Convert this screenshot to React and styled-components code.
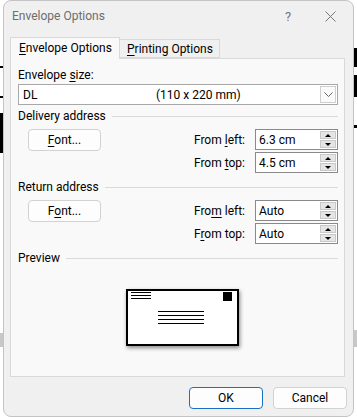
import React from "react";
import styled, { createGlobalStyle } from "styled-components";

const Global = createGlobalStyle`
  html, body { margin: 0; padding: 0; background: #ffffff; }
  body { font-family: "Segoe UI", Roboto, "Noto Sans", sans-serif; font-size: 12px; color: #000; }
  #root { position: relative; width: 357px; height: 418px; overflow: hidden; }
`;

const Backdrop = styled.div`
  position: absolute;
  left: ${(p) => p.$x}px;
  top: ${(p) => p.$y}px;
  width: ${(p) => p.$w}px;
  height: ${(p) => p.$h}px;
  background: ${(p) => p.$c || "#000"};
`;

const Window = styled.div`
  position: relative;
  margin-left: 3px;
  width: 351px;
  height: 417px;
  box-sizing: border-box;
  border: 1px solid #c4c4c4;
  border-radius: 8px;
  background: #f0f0f0;
  display: flex;
  flex-direction: column;
  padding: 0 6px;
`;

const TitleBar = styled.div`
  height: 30px;
  display: flex;
  align-items: center;
  padding-left: 2px;
  color: #6d6d6d;
`;

const Title = styled.div`
  flex: 1;
`;

const TitleButton = styled.div`
  width: ${(p) => p.$w}px;
  display: flex;
  justify-content: center;
  align-items: center;
  color: #777;
  font-size: 13px;
`;

const Tabs = styled.div`
  margin-top: 6px;
  height: 21px;
  display: flex;
  align-items: flex-end;
  position: relative;
  z-index: 1;
`;

const Tab = styled.div`
  box-sizing: border-box;
  width: ${(p) => p.$w}px;
  height: ${(p) => (p.$active ? 22 : 19)}px;
  margin-bottom: ${(p) => (p.$active ? -1 : 0)}px;
  padding-left: ${(p) => p.$pad}px;
  display: flex;
  align-items: center;
  border: 1px solid #d9d9d9;
  border-bottom: ${(p) => (p.$active ? "none" : "1px solid #d9d9d9")};
  border-left: ${(p) => (p.$first ? "1px solid #d9d9d9" : "none")};
  background: ${(p) => (p.$active ? "#f9f9f9" : "#f0f0f0")};
  padding-bottom: ${(p) => (p.$active ? 1 : 0)}px;
`;

const Panel = styled.div`
  box-sizing: border-box;
  height: 319px;
  margin-right: 2px;
  border: 1px solid #d9d9d9;
  background: #f9f9f9;
  padding: 8px 6px 0 7px;
  display: flex;
  flex-direction: column;
`;

const Label = styled.div`
  line-height: 16px;
  height: 16px;
`;

const Combo = styled.div`
  margin-top: 1px;
  height: 21px;
  box-sizing: border-box;
  border: 1px solid #a8a8a8;
  background: #fff;
  display: flex;
  align-items: center;
  padding-left: 4px;
`;

const ComboMain = styled.span`
  width: 133px;
`;

const ComboRest = styled.span`
  flex: 1;
`;

const DropButton = styled.div`
  width: 16px;
  height: 17px;
  margin-right: 1px;
  box-sizing: border-box;
  border: 1px solid #cfcfcf;
  background: #fafafa;
  display: flex;
  align-items: center;
  justify-content: center;
`;

const GroupHeader = styled.div`
  margin-top: ${(p) => p.$mt}px;
  height: 16px;
  line-height: 16px;
  display: flex;
  align-items: center;
  gap: 6px;
  &::after {
    content: "";
    flex: 1;
    height: 1px;
    background: #dadada;
  }
`;

const AddressGrid = styled.div`
  margin-top: 5px;
  display: grid;
  grid-template-columns: 1fr auto 83px;
  grid-template-rows: 21px 21px;
  row-gap: 2px;
  column-gap: 10px;
  align-items: center;
`;

const PushButton = styled.button`
  box-sizing: border-box;
  width: ${(p) => p.$w || 74}px;
  height: 22px;
  margin-left: ${(p) => p.$ml || 0}px;
  border: 1px solid ${(p) => (p.$default ? "#1a6fc4" : "#d2d2d2")};
  border-radius: 4px;
  background: #fdfdfd;
  font: inherit;
  color: #000;
  padding: 0;
  align-self: start;
`;

const FieldLabel = styled.div`
  text-align: right;
`;

const SpinBox = styled.div`
  height: 21px;
  box-sizing: border-box;
  border: 1px solid #8a8a8a;
  background: #fff;
  display: flex;
  align-items: center;
  padding-left: 3px;
`;

const SpinText = styled.span`
  flex: 1;
`;

const SpinButtons = styled.div`
  width: 16px;
  height: 17px;
  margin-right: 1px;
  display: flex;
  flex-direction: column;
  gap: 1px;
`;

const SpinHalf = styled.div`
  flex: 1;
  box-sizing: border-box;
  background: #e5e5e5;
  border: 1px solid #c8c8c8;
  display: flex;
  align-items: center;
  justify-content: center;
  &::before {
    content: "";
    width: 0;
    height: 0;
    border-left: 3px solid transparent;
    border-right: 3px solid transparent;
    ${(p) => (p.$up ? "border-bottom: 3px solid #000;" : "border-top: 3px solid #000;")}
  }
`;

const PreviewArea = styled.div`
  margin-top: 23px;
  padding-left: 108px;
`;

const Envelope = styled.div`
  position: relative;
  width: 113px;
  height: 57px;
  box-sizing: border-box;
  border: 2px solid #000;
  background: #fff;
  box-shadow: 1px 2px 4px rgba(0, 0, 0, 0.45);
`;

const Lines = styled.div`
  position: absolute;
  left: ${(p) => p.$x}px;
  top: ${(p) => p.$y}px;
  width: ${(p) => p.$w}px;
  display: flex;
  flex-direction: column;
  gap: ${(p) => p.$gap}px;
  & > i {
    display: block;
    height: 1px;
    background: #000;
  }
`;

const Stamp = styled.div`
  position: absolute;
  right: 5px;
  top: 1px;
  width: 9px;
  height: 9px;
  background: #000;
`;

const ButtonRow = styled.div`
  margin-top: 10px;
  display: flex;
  justify-content: flex-end;
  gap: 10px;
`;

const Key = styled.u`
  text-decoration: underline;
  text-underline-offset: 2px;
  text-decoration-thickness: 1px;
`;

function Spin({ value }) {
  return (
    <SpinBox>
      <SpinText>{value}</SpinText>
      <SpinButtons>
        <SpinHalf $up />
        <SpinHalf />
      </SpinButtons>
    </SpinBox>
  );
}

export default function App() {
  return (
    <>
      <Global />
      <Backdrop $x={0} $y={66} $w={3} $h={2} />
      <Backdrop $x={0} $y={96} $w={3} $h={2} />
      <Backdrop $x={0} $y={113} $w={3} $h={40} />
      <Backdrop $x={0} $y={333} $w={3} $h={14} $c="#c8c8c8" />
      <Backdrop $x={354} $y={48} $w={3} $h={19} />
      <Backdrop $x={354} $y={75} $w={3} $h={22} />
      <Backdrop $x={354} $y={125} $w={3} $h={3} />
      <Backdrop $x={354} $y={330} $w={3} $h={17} $c="#c8c8c8" />
      <Window>
        <TitleBar>
          <Title>Envelope Options</Title>
          <TitleButton $w={22}>?</TitleButton>
          <TitleButton $w={22} style={{ marginLeft: 20, marginRight: 6 }}>
            <svg width="11" height="11" viewBox="0 0 11 11">
              <path d="M0.5 0.5 L10.5 10.5 M10.5 0.5 L0.5 10.5" stroke="#777" strokeWidth="1" fill="none" />
            </svg>
          </TitleButton>
        </TitleBar>
        <Tabs>
          <Tab $active $first $w={110} $pad={8}>
            <span><Key>E</Key>nvelope Options</span>
          </Tab>
          <Tab $w={100} $pad={7}>
            <span><Key>P</Key>rinting Options</span>
          </Tab>
        </Tabs>
        <Panel>
          <Label>Envelope <Key>s</Key>ize:</Label>
          <Combo>
            <ComboMain>DL</ComboMain>
            <ComboRest>(110 x 220 mm)</ComboRest>
            <DropButton>
              <svg width="9" height="5" viewBox="0 0 9 5">
                <path d="M0.5 0.5 L4.5 4.5 L8.5 0.5" stroke="#666" strokeWidth="1" fill="none" />
              </svg>
            </DropButton>
          </Combo>
          <GroupHeader $mt={3}>Delivery address</GroupHeader>
          <AddressGrid>
            <PushButton $ml={10} $w={73}><Key>F</Key>ont...</PushButton>
            <FieldLabel>From <Key>l</Key>eft:</FieldLabel>
            <Spin value="6.3 cm" />
            <span />
            <FieldLabel>From <Key>t</Key>op:</FieldLabel>
            <Spin value="4.5 cm" />
          </AddressGrid>
          <GroupHeader $mt={6}>Return address</GroupHeader>
          <AddressGrid>
            <PushButton $ml={10} $w={73}>F<Key>o</Key>nt...</PushButton>
            <FieldLabel>Fro<Key>m</Key> left:</FieldLabel>
            <Spin value="Auto" />
            <span />
            <FieldLabel>F<Key>r</Key>om top:</FieldLabel>
            <Spin value="Auto" />
          </AddressGrid>
          <GroupHeader $mt={6}>Preview</GroupHeader>
          <PreviewArea>
            <Envelope>
              <Lines $x={3} $y={1} $w={20} $gap={2}>
                <i /><i /><i />
              </Lines>
              <Stamp />
              <Lines $x={30} $y={20} $w={46} $gap={3}>
                <i /><i /><i /><i />
              </Lines>
            </Envelope>
          </PreviewArea>
        </Panel>
        <ButtonRow>
          <PushButton $default $w={74}>OK</PushButton>
          <PushButton $w={74}>Cancel</PushButton>
        </ButtonRow>
      </Window>
    </>
  );
}
